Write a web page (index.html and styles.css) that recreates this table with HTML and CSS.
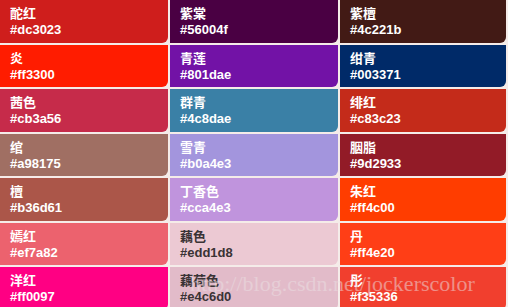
FILE: index.html
```html
<!DOCTYPE html>
<html lang="zh">
<head>
<meta charset="utf-8">
<link rel="stylesheet" href="styles.css">
</head>
<body>
<div class="board">
  <div class="grid">
    <div class="sw" style="background:#cf1e1c"><div class="nm">酡红</div><div class="hx">#dc3023</div></div>
    <div class="sw" style="background:#4a0043"><div class="nm">紫棠</div><div class="hx">#56004f</div></div>
    <div class="sw" style="background:#421a15"><div class="nm">紫檀</div><div class="hx">#4c221b</div></div>

    <div class="sw" style="background:#ff1c00"><div class="nm">炎</div><div class="hx">#ff3300</div></div>
    <div class="sw" style="background:#7212a6"><div class="nm">青莲</div><div class="hx">#801dae</div></div>
    <div class="sw" style="background:#002a68"><div class="nm">绀青</div><div class="hx">#003371</div></div>

    <div class="sw" style="background:#c62b4a"><div class="nm">茜色</div><div class="hx">#cb3a56</div></div>
    <div class="sw" style="background:#3a80a6"><div class="nm">群青</div><div class="hx">#4c8dae</div></div>
    <div class="sw" style="background:#c42b1a"><div class="nm">绯红</div><div class="hx">#c83c23</div></div>

    <div class="sw" style="background:#a06f63"><div class="nm">绾</div><div class="hx">#a98175</div></div>
    <div class="sw" style="background:#a395dd"><div class="nm">雪青</div><div class="hx">#b0a4e3</div></div>
    <div class="sw" style="background:#921b27"><div class="nm">胭脂</div><div class="hx">#9d2933</div></div>

    <div class="sw" style="background:#ab5649"><div class="nm">檀</div><div class="hx">#b36d61</div></div>
    <div class="sw" style="background:#c094dd"><div class="nm">丁香色</div><div class="hx">#cca4e3</div></div>
    <div class="sw" style="background:#ff3d00"><div class="nm">朱红</div><div class="hx">#ff4c00</div></div>

    <div class="sw" style="background:#ec626e"><div class="nm">嫣红</div><div class="hx">#ef7a82</div></div>
    <div class="sw light" style="background:#ecc9d3"><div class="nm">藕色</div><div class="hx">#edd1d8</div></div>
    <div class="sw" style="background:#ff3e16"><div class="nm">丹</div><div class="hx">#ff4e20</div></div>

    <div class="sw" style="background:#ff0083"><div class="nm">洋红</div><div class="hx">#ff0097</div></div>
    <div class="sw light" style="background:#e2bbc9"><div class="nm">藕荷色</div><div class="hx">#e4c6d0</div></div>
    <div class="sw" style="background:#f13f2e"><div class="nm">彤</div><div class="hx">#f35336</div></div>
  </div>
  <div class="mark">http://blog.csdn.net/jockerscolor</div>
</div>
</body>
</html>
```
FILE: styles.css
```css
html, body {
  margin: 0;
  padding: 0;
  background: #f5ece9;
  overflow: hidden;
}
.board {
  position: relative;
  width: 508px;
  height: 307px;
  overflow: hidden;
}
.grid {
  display: grid;
  grid-template-columns: 168px 168px 166px;
  grid-auto-rows: 42.5px;
  column-gap: 2px;
  row-gap: 2px;
}
.sw {
  border-bottom-right-radius: 6px;
  padding: 5px 0 0 10px;
  color: #ffffff;
  box-sizing: border-box;
}
.nm {
  font-family: "Noto Sans CJK SC", "Noto Sans", sans-serif;
  font-weight: 700;
  font-size: 13px;
  line-height: 16px;
}
.hx {
  font-family: "Liberation Sans", Arial, sans-serif;
  font-weight: 700;
  font-size: 13px;
  line-height: 17px;
}
.light {
  color: #3a3335;
}
.mark {
  position: absolute;
  left: 190px;
  top: 273px;
  font-family: "Liberation Serif", serif;
  font-size: 22px;
  line-height: 22px;
  color: rgba(235, 225, 228, 0.5);
  white-space: nowrap;
}
```
